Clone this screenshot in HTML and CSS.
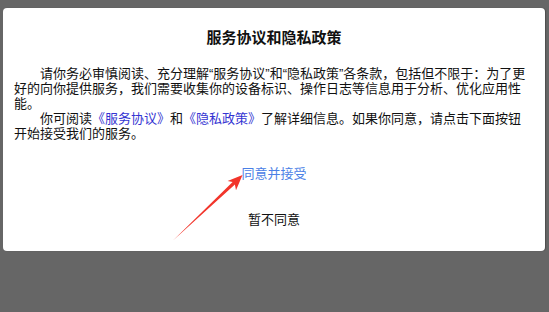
FILE: index.html
```html
<!DOCTYPE html>
<html>
  <head>
    <meta charset="utf-8">
    <title>服务协议和隐私政策</title>
    <link rel="stylesheet" href="styles.css">
  </head>
  <body>

	<div class="dialog">
		<div class="dialog-title">服务协议和隐私政策</div>
		<div class="dialog-body">
			<p>请你务必审慎阅读、充分理解“服务协议”和“隐私政策”各条款，包括但不限于：为了更好的向你提供服务，我们需要收集你的设备标识、操作日志等信息用于分析、优化应用性能。</p>
			<p>你可阅读<a class="link" href="#">《服务协议》</a>和<a class="link" href="#">《隐私政策》</a>了解详细信息。如果你同意，请点击下面按钮开始接受我们的服务。</p>
		</div>
		<div class="btn btn-agree">同意并接受</div>
		<div class="btn btn-refuse">暂不同意</div>
	</div>

	<!-- annotation arrow -->
	<svg class="arrow" width="549" height="312" viewBox="0 0 549 312">
		<polygon points="173,240.5 232.6,181.9 227.6,180.9 242.5,175 236,190.2 234.9,184.4" fill="#f2352b" />
	</svg>

  </body>
</html>
```

FILE: styles.css
```css
body { margin: 0; width: 549px; height: 312px; background: #666666; font-family: "Liberation Sans", "Noto Sans CJK SC", sans-serif; position: relative; overflow: hidden; }

.dialog { margin: 8px 0 0 3px; width: 542px; box-sizing: border-box; padding: 20px 13px 10px 11px; background: #fff; border-radius: 4px; box-shadow: 1px 0 1px rgba(0, 0, 0, 0.25); }
.dialog-title { margin-right: -2px; font-size: 15px; line-height: 20px; font-weight: bold; text-align: center; color: #111; }

.dialog-body { margin-top: 18px; font-size: 13px; line-height: 15px; color: #111; }
.dialog-body p { margin: 0; text-indent: 2em; }
.link { color: #3434d2; text-decoration: none; }

.btn { height: 46px; margin-right: -2px; display: flex; align-items: center; justify-content: center; font-size: 13px; }
.btn-agree { margin-top: 8px; color: #4a80e6; }
.btn-refuse { color: #111; }

.arrow { position: absolute; left: 0; top: 0; pointer-events: none; }
```
